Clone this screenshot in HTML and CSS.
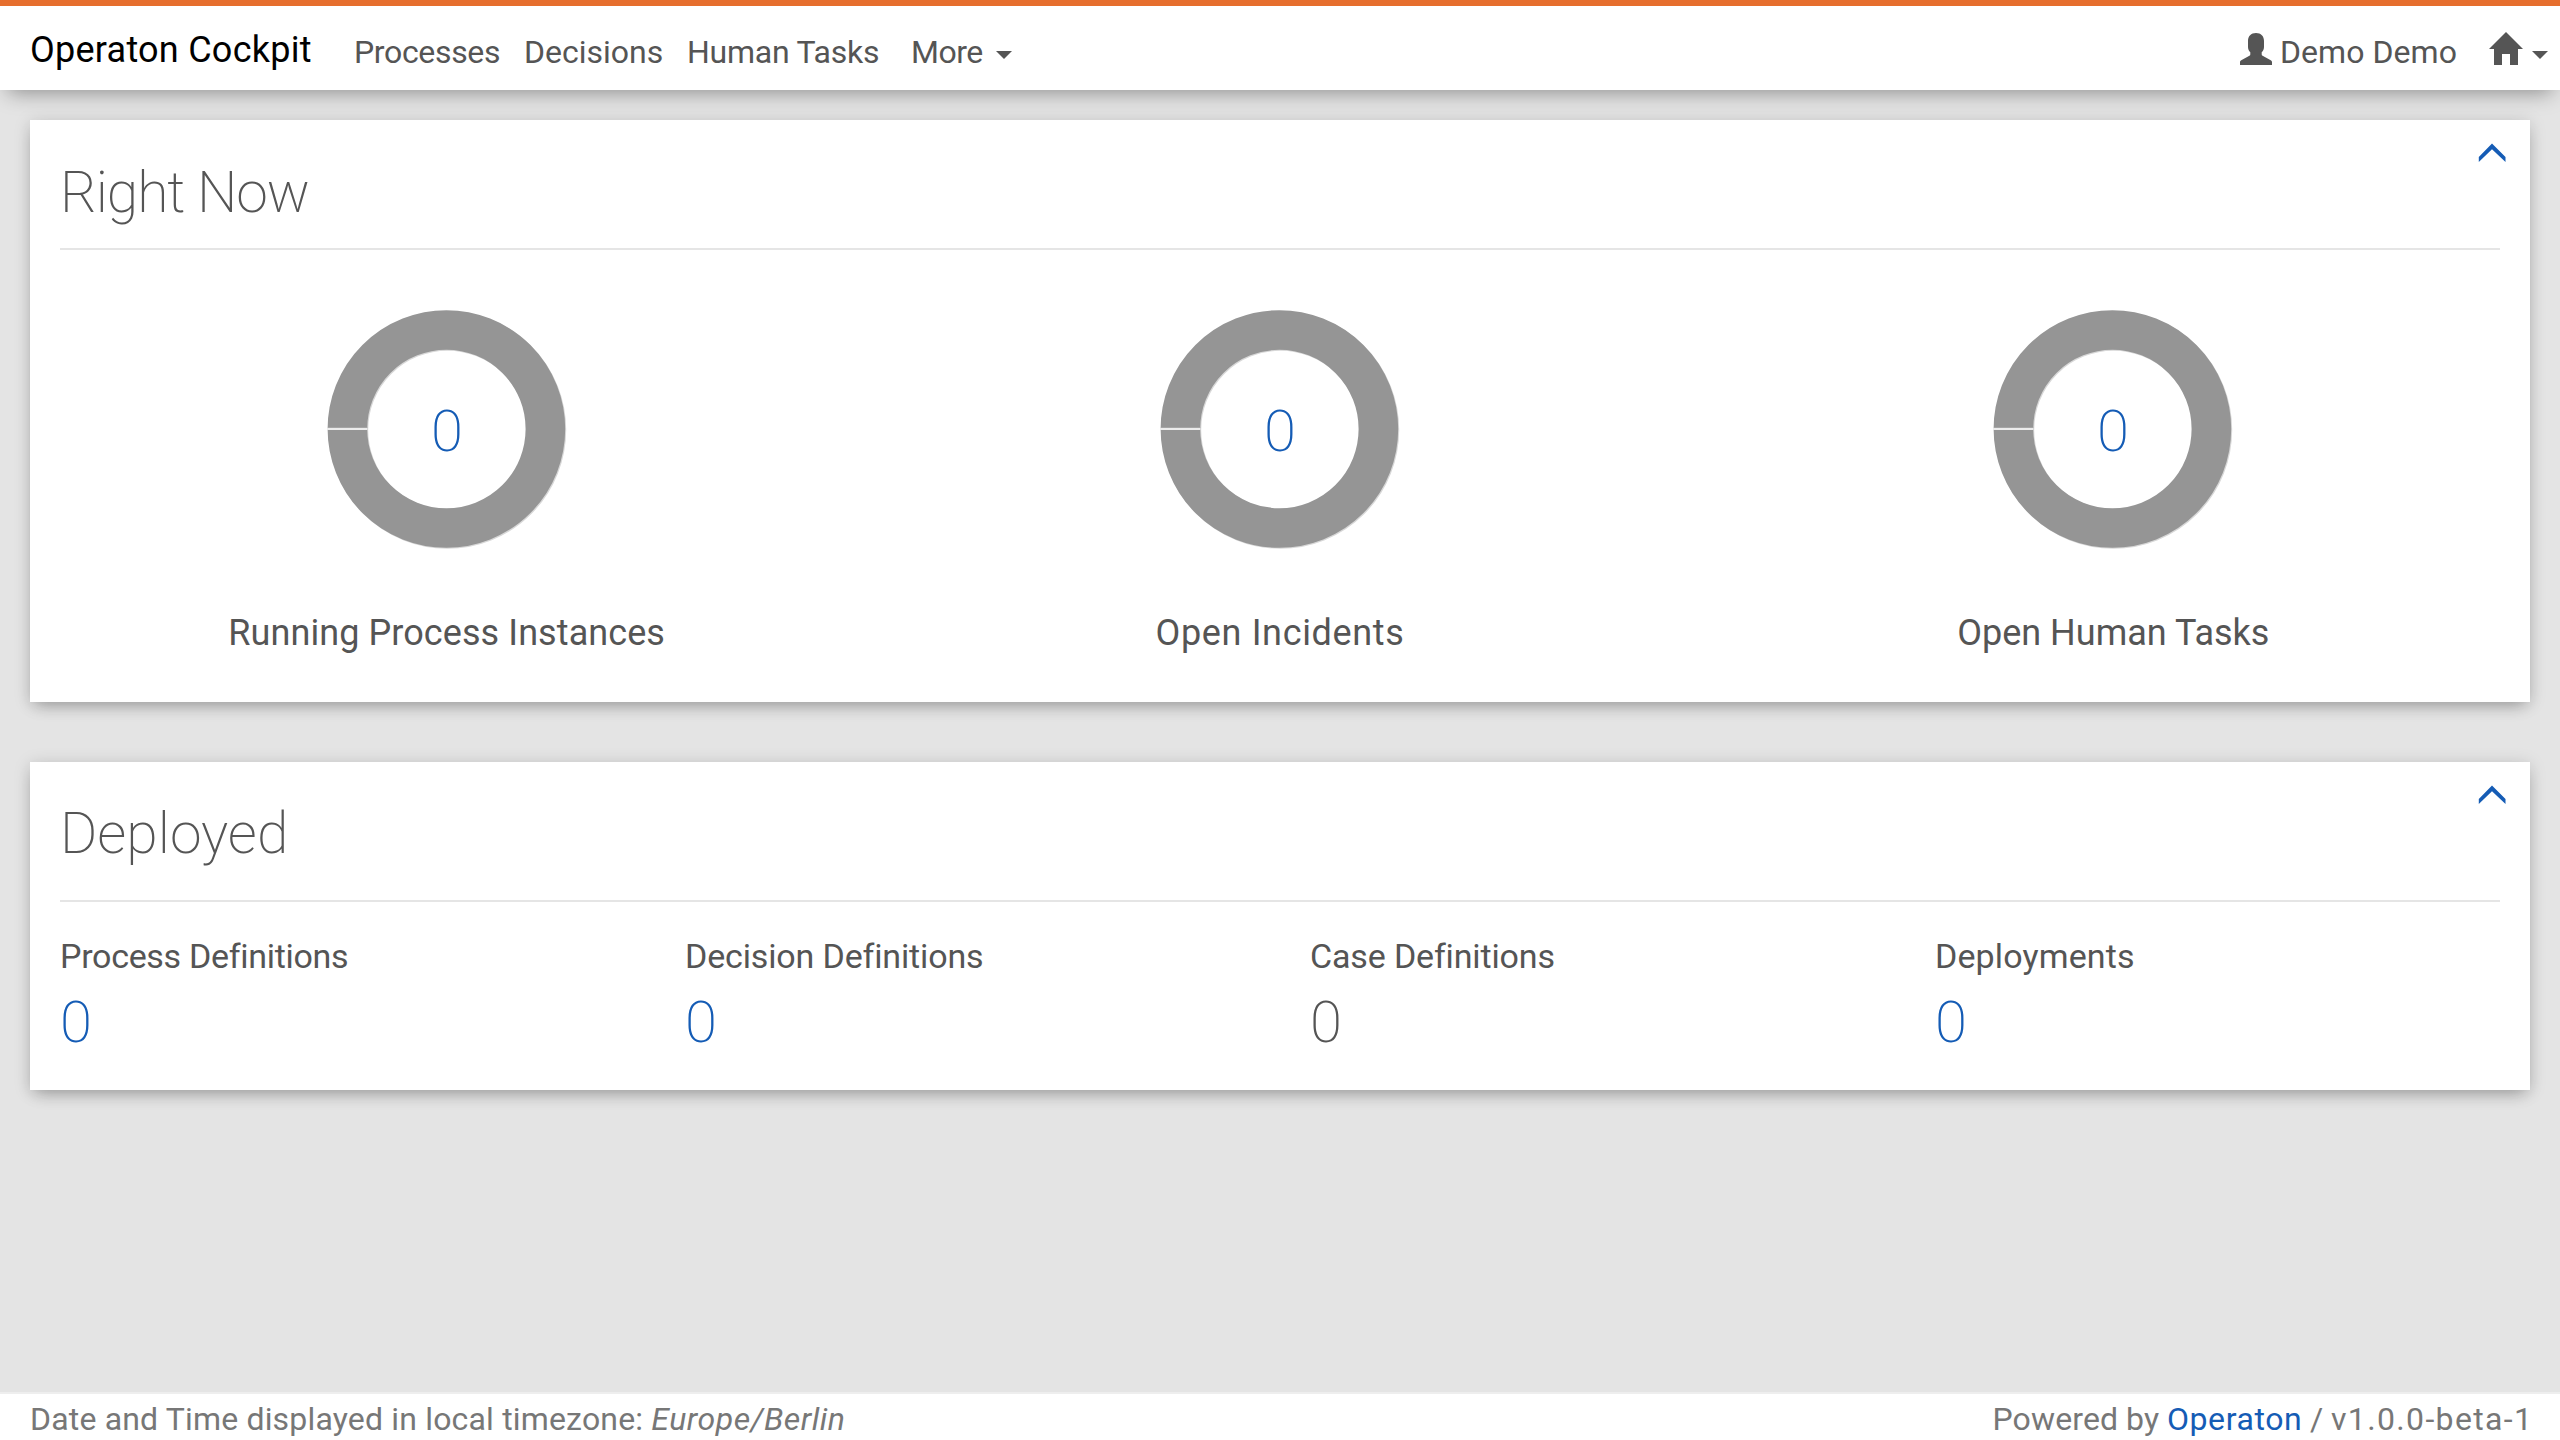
FILE: index.html
```html
<!DOCTYPE html>
<html lang="en">
<head>
<meta charset="utf-8">
<title>Operaton Cockpit</title>
<link rel="stylesheet" href="styles.css">
</head>
<body>
<svg class="defs" aria-hidden="true">
  <symbol id="chevron" viewBox="0 0 28 20"><path d="M14 0.4 27.5 13.9V19L14 6.2.8 19V13.9z"/></symbol>
  <symbol id="donut" viewBox="0 0 240 240">
    <circle cx="120.4" cy="121" r="99" fill="none" stroke="#d8d8d8" stroke-width="39.6"/>
    <circle cx="119.400" cy="120" r="99" fill="none" stroke="#959595" stroke-width="39.6"/>
    <path d="M1 118.5H40.500V121H1z" fill="#b5b5b5"/>
    <path d="M0 119H40.500V121H0z" fill="#ececec"/>
  </symbol>
</svg>
<header class="topbar">
  <a class="brand">Operaton Cockpit</a>
  <nav class="nav">
    <a class="nav-item processes">Processes</a>
    <a class="nav-item decisions">Decisions</a>
    <a class="nav-item tasks">Human Tasks</a>
    <a class="nav-item more">More<i class="caret"></i></a>
  </nav>
  <div class="account">
    <svg class="icon user" viewBox="0 0 32 32"><path d="M16 0c5 0 8 3.2 8 8v6c0 2.200-.9 4-2.300 5.200V21.500c0 .6.300.9.9 1.200l7.700 4.200c1.200.7 1.700 1.300 1.700 2.300V32H0V29.200c0-1 .5-1.600 1.700-2.300l7.700-4.200c.6-.3.9-.6.9-1.200V19.200C8.900 18 8 16.200 8 14V8c0-4.800 3-8 8-8z"/></svg>
    <span class="user-name">Demo Demo</span>
    <svg class="icon home" viewBox="0 0 34 33"><path d="M17 0 34 17H29V33H21V22H13V33H5V17H0z"/></svg>
    <i class="caret"></i>
  </div>
</header>
<main class="content">
  <section class="panel">
    <div class="panel-head now"><h2>Right Now</h2><svg class="toggle"><use href="#chevron"/></svg></div>
    <div class="charts">
      <div class="chart"><svg class="donut"><use href="#donut"/><text x="120" y="142">0</text></svg><h4 class="instances">Running Process Instances</h4></div>
      <div class="chart"><svg class="donut"><use href="#donut"/><text x="120" y="142">0</text></svg><h4 class="incidents">Open Incidents</h4></div>
      <div class="chart"><svg class="donut"><use href="#donut"/><text x="120" y="142">0</text></svg><h4>Open Human Tasks</h4></div>
    </div>
  </section>
  <section class="panel">
    <div class="panel-head deployed"><h2>Deployed</h2><svg class="toggle"><use href="#chevron"/></svg></div>
    <div class="counts">
      <div class="count"><h4 class="procdef">Process Definitions</h4><a>0</a></div>
      <div class="count"><h4>Decision Definitions</h4><a>0</a></div>
      <div class="count plain"><h4>Case Definitions</h4><a>0</a></div>
      <div class="count"><h4 class="deployments">Deployments</h4><a>0</a></div>
    </div>
  </section>
</main>
<footer class="footer">
  <div class="zone">Date and Time displayed in local timezone: <em>Europe/Berlin</em></div>
  <div class="powered">Powered by <a>Operaton</a> / <span class="version">v1.0.0-beta-1</span></div>
</footer>
</body>
</html>
```
FILE: styles.css
```css
* { box-sizing: border-box; }
body {
  margin: 0;
  height: 1440px;
  display: flex;
  flex-direction: column;
  overflow: hidden;
  background: #e4e4e4;
  color: #555;
  font-family: Roboto, "Liberation Sans", sans-serif;
}
h2, h4 { margin: 0; font-weight: 400; }
.defs { display: none; }

.topbar {
  height: 90px;
  flex: none;
  display: flex;
  align-items: flex-start;
  padding: 0 12px 0 30px;
  background: #fff;
  border-top: 6px solid #e66e2e;
  box-shadow: 0 10px 20px -8px rgba(0, 0, 0, .4);
}
.brand { width: 324px; color: #000; font-size: 36px; line-height: 88px; letter-spacing: .25px; }
.nav { display: flex; flex: 1; font-size: 32px; line-height: 92px; white-space: nowrap; }
.processes { width: 170px; letter-spacing: -.34px; }
.decisions { width: 163px; }
.tasks { width: 224px; letter-spacing: -.25px; }
.more { letter-spacing: -.5px; }
.caret {
  display: inline-block;
  border: 8px solid transparent;
  border-top-color: #555;
  border-bottom: 0;
}
.more .caret { margin-left: 13px; vertical-align: 4px; }
.account { display: flex; align-items: flex-start; font-size: 32px; line-height: 92px; }
.icon { fill: #555; }
.user { width: 32px; height: 32px; margin: 27px 8px 0 0; }
.user-name { width: 209px; letter-spacing: .05px; }
.home { width: 34px; height: 33px; margin: 26px 9px 0 0; }
.account .caret { margin-top: 45px; }

.content { flex: 1; padding: 30px; display: flex; flex-direction: column; gap: 60px; }
.panel {
  background: #fff;
  box-shadow: 0 8px 16px -6px rgba(0, 0, 0, .27), 0 2px 16px rgba(0, 0, 0, .15);
}
.panel-head {
  display: flex;
  justify-content: space-between;
  margin: 0 30px;
  border-bottom: 2px solid #e5e5e5;
}
.panel-head h2 { font-size: 57px; font-weight: 160; }
.now { padding-top: 18px; }
.now h2 { line-height: 110px; letter-spacing: -1.1px; }
.deployed { padding-top: 6px; }
.deployed h2 { line-height: 132px; }
.toggle { width: 28px; height: 20px; margin-right: -6px; fill: #155cb5; }
.now .toggle { margin-top: 5px; }
.deployed .toggle { margin-top: 17px; }

.charts { display: grid; grid-template-columns: repeat(3, 1fr); padding: 59px 0 44px; }
.chart { display: flex; flex-direction: column; align-items: center; gap: 59px; }
.donut { width: 240px; height: 240px; }
.donut text { font-size: 58px; font-weight: 200; fill: #155cb5; text-anchor: middle; }
.chart h4 { font-size: 36px; line-height: 50px; }
.chart .instances { letter-spacing: .08px; }
.chart .incidents { letter-spacing: .65px; }

.counts { display: grid; grid-template-columns: repeat(4, 1fr); padding: 27px 0 30px; }
.count { padding-left: 30px; }
.count h4 { font-size: 34px; line-height: 54px; letter-spacing: -.15px; }
.count .procdef { letter-spacing: -.3px; }
.count .deployments { letter-spacing: .13px; }
.count a { display: block; margin-top: 1px; font-size: 58px; font-weight: 200; line-height: 76px; color: #155cb5; }
.count.plain a { color: #555; }

.footer {
  height: 48px;
  flex: none;
  display: flex;
  justify-content: space-between;
  padding: 4px 28px 0 30px;
  background: #fff;
  border-top: 2px solid #eee;
  color: #777;
  font-size: 32px;
  line-height: 42px;
  white-space: nowrap;
}
.zone { letter-spacing: .17px; }
.zone em { letter-spacing: .5px; }
.powered { letter-spacing: .16px; word-spacing: -.4px; }
.powered a { color: #155cb5; letter-spacing: .57px; }
.version { letter-spacing: 1.35px; margin-right: -1.35px; }
```
